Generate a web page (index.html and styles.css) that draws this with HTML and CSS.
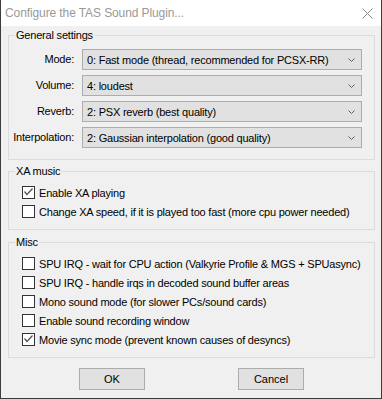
FILE: index.html
```html
<!DOCTYPE html>
<html lang="en">
<head>
    <meta charset="UTF-8">
    <title>Configure the TAS Sound Plugin...</title>
    <link rel="stylesheet" href="styles.css">
</head>
<body>
    <div class="window">
        <div class="titlebar">
            <span class="title">Configure the TAS Sound Plugin...</span>
            <svg class="close-icon" width="11" height="11" viewBox="0 0 11 11">
                <path d="M0.5 0.5 L10.5 10.5 M10.5 0.5 L0.5 10.5" stroke="#8a8a8a" stroke-width="1" fill="none"/>
            </svg>
        </div>

        <div class="content">
            <fieldset class="group general">
                <legend>General settings</legend>
                <div class="settings">
                    <label>Mode:</label>
                    <div class="combo"><span>0: Fast mode (thread, recommended for PCSX-RR)</span><i class="chevron"></i></div>
                    <label>Volume:</label>
                    <div class="combo"><span>4: loudest</span><i class="chevron"></i></div>
                    <label>Reverb:</label>
                    <div class="combo"><span>2: PSX reverb (best quality)</span><i class="chevron"></i></div>
                    <label>Interpolation:</label>
                    <div class="combo"><span>2: Gaussian interpolation (good quality)</span><i class="chevron"></i></div>
                </div>
            </fieldset>

            <fieldset class="group xa">
                <legend>XA music</legend>
                <div class="checks">
                    <div class="check"><span class="box checked"></span>Enable XA playing</div>
                    <div class="check"><span class="box"></span>Change XA speed, if it is played too fast (more cpu power needed)</div>
                </div>
            </fieldset>

            <fieldset class="group misc">
                <legend>Misc</legend>
                <div class="checks">
                    <div class="check"><span class="box"></span>SPU IRQ - wait for CPU action (Valkyrie Profile &amp; MGS + SPUasync)</div>
                    <div class="check"><span class="box"></span>SPU IRQ - handle irqs in decoded sound buffer areas</div>
                    <div class="check"><span class="box"></span>Mono sound mode (for slower PCs/sound cards)</div>
                    <div class="check"><span class="box"></span>Enable sound recording window</div>
                    <div class="check"><span class="box checked"></span>Movie sync mode (prevent known causes of desyncs)</div>
                </div>
            </fieldset>

            <div class="buttons">
                <button>OK</button>
                <button>Cancel</button>
            </div>
        </div>
    </div>
</body>
</html>
```

FILE: styles.css
```css
body {
    margin: 0;
    font-family: "Liberation Sans", Arial, sans-serif;
    font-size: 11px;
    letter-spacing: -0.2px;
    color: #000;
}

.window {
    width: 382px;
    height: 399px;
    box-sizing: border-box;
    background-color: #f0f0f0;
    border: 1px solid #3c3c3c;
    border-top: none;
}

.titlebar {
    height: 26px;
    background-color: #fff;
    display: flex;
    align-items: center;
    justify-content: space-between;
    padding: 0 8px 0 4px;
}

.title {
    font-size: 12px;
    letter-spacing: -0.1px;
    color: #999;
}

.close-icon {
    display: block;
}

.content {
    padding: 3px 6px 0 7px;
}

/* group boxes */
.group {
    margin: 0;
    padding: 0 0 9px 0;
    border: 1px solid #dcdcdc;
    min-width: 0;
}

.group legend {
    margin-left: 6px;
    padding: 0 1px;
    line-height: 13px;
}

.general {
    padding-bottom: 11px;
}

.xa {
    margin-top: 5px;
}

.misc {
    margin-top: 6px;
}

.settings {
    display: grid;
    grid-template-columns: 65px 280px;
    column-gap: 8px;
    row-gap: 5px;
    padding-top: 7px;
}

.settings label {
    text-align: right;
    line-height: 21px;
    white-space: nowrap;
}

.combo {
    height: 21px;
    box-sizing: border-box;
    border: 1px solid #adadad;
    background-color: #e1e1e1;
    display: flex;
    align-items: center;
    justify-content: space-between;
    padding: 0 6px 0 4px;
    white-space: nowrap;
}

.chevron {
    width: 7px;
    height: 4px;
    background: url("data:image/svg+xml,%3Csvg xmlns='http://www.w3.org/2000/svg' width='7' height='4'%3E%3Cpath d='M0.5 0.5 L3.5 3.5 L6.5 0.5' stroke='%23606060' fill='none'/%3E%3C/svg%3E") no-repeat;
}

/* checkboxes */
.checks {
    display: flex;
    flex-direction: column;
    gap: 2px;
    padding-top: 6px;
}

.check {
    display: flex;
    align-items: center;
    gap: 4px;
    height: 17px;
    padding-left: 13px;
    white-space: nowrap;
}

.box {
    width: 13px;
    height: 13px;
    box-sizing: border-box;
    border: 1px solid #333;
    background-color: #fff;
    flex: none;
}

.box.checked {
    background: #fff url("data:image/svg+xml,%3Csvg xmlns='http://www.w3.org/2000/svg' width='11' height='11'%3E%3Cpath d='M1.5 4.5 L4 7.5 L9.5 1.5' stroke='%23505050' stroke-width='1.2' fill='none'/%3E%3C/svg%3E") no-repeat;
}

/* dialog buttons */
.buttons {
    display: flex;
    gap: 93px;
    padding: 10px 0 0 71px;
}

.buttons button {
    width: 66px;
    height: 22px;
    border: 1px solid #adadad;
    background-color: #e1e1e1;
    font-family: inherit;
    font-size: 11px;
    color: #000;
    padding: 0;
}
```
